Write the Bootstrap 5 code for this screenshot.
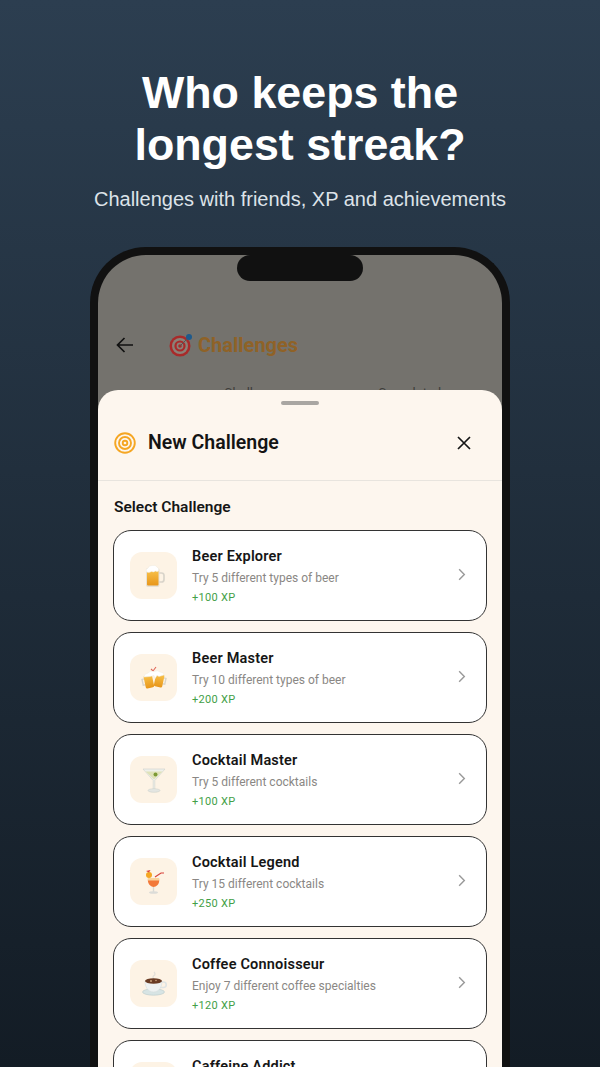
<!DOCTYPE html>
<html lang="en">
<head>
  <meta charset="UTF-8">
  <title>Challenges</title>
  <link href="https://cdn.jsdelivr.net/npm/bootstrap@5.3.3/dist/css/bootstrap.min.css" rel="stylesheet">
  <style>
    html, body { height: 1067px; overflow: hidden; }
    body { background: linear-gradient(180deg, #2c3e50 0%, #131c25 100%); font-family: Roboto, sans-serif; }
    .promo-head { padding-top: 66px; height: 247px; color: #fff; text-align: center; font-family: "Liberation Sans", Arial, sans-serif; }
    .promo-head h1 { font-size: 44.8px; line-height: 52px; font-weight: 700; margin: 0; }
    .promo-head p { font-size: 20px; line-height: 24px; margin: 17px 0 0; color: #dde3e9; }
    .phone { width: 420px; height: 840px; margin: 0 auto; border: 8px solid #111; border-bottom: 0; border-radius: 56px 56px 0 0; background: #74726d; position: relative; overflow: hidden; }
    .notch { position: absolute; left: 139px; top: 0; width: 126px; height: 26px; background: #111; border-radius: 13px; z-index: 3; }
    .app-bar { padding: 52px 0 0 17px; height: 128px; color: #111; }
    .app-bar .back { width: 20px; height: 20px; margin-right: 34px; }
    .app-title { font-size: 20px; font-weight: 700; color: #8f6227; margin-left: 5px; }
    .behind-tabs { font-size: 13px; color: #3f3e3b; padding-left: 126px; gap: 90px; }
    .sheet { position: absolute; left: 0; right: 0; top: 135px; bottom: 0; background: #fdf6ee; border-radius: 20px 20px 0 0; z-index: 2; }
    .grip { width: 38px; height: 4px; border-radius: 2px; background: #a9a6a2; margin: 11px auto 0; }
    .sheet-head { height: 76px; padding: 0 16px; border-bottom: 1px solid #e8e4de; }
    .sheet-head h2 { font-size: 19.5px; line-height: 24px; font-weight: 600; color: #141414; margin: 0 0 0 12px; }
    .sheet-head .shut { margin-right: 14px; }
    .sect-label { font-size: 15.5px; line-height: 20px; font-weight: 600; color: #161616; margin: 16px 16px 13px; }
    .pick-list { margin: 0 15px; gap: 11px; }
    .pick { height: 91px; flex: none; background: #fff; border: 1.5px solid #333; border-radius: 18px; padding: 0 16px; }
    .tile { width: 47px; height: 47px; flex: none; border-radius: 12px; background: #fdf3e5; margin-right: 15px; }
    .tile svg { width: 26px; height: 26px; }
    .pick-body { min-width: 0; padding-top: 2px; }
    .pick-name { font-size: 14.5px; line-height: 18px; font-weight: 600; color: #161616; letter-spacing: .2px; }
    .pick-desc { font-size: 12px; line-height: 16px; color: #8a8784; margin-top: 4px; }
    .pick-xp { font-size: 11px; line-height: 14px; color: #43a047; letter-spacing: .3px; margin-top: 5px; }
    .chev { width: 15px; height: 15px; flex: none; margin-left: auto; margin-right: 1px; margin-top: -2px; }
  </style>
</head>
<body>
  <div class="promo-head">
    <h1>Who keeps the<br>longest streak?</h1>
    <p>Challenges with friends, XP and achievements</p>
  </div>

  <div class="phone">
    <div class="notch"></div>

    <!-- screen behind the sheet -->
    <div class="app-bar d-flex align-items-center">
      <svg class="back" viewBox="0 0 20 20" fill="none" stroke="#111" stroke-width="1.7"><path d="M18 10H2.500M9.500 3l-7 7 7 7"/></svg>
      <svg width="24" height="24" viewBox="0 0 24 24" fill="none">
        <circle cx="11" cy="13" r="10.500" fill="#a82a2a"/><circle cx="11" cy="13" r="8" fill="#8b8178"/><circle cx="11" cy="13" r="5.600" fill="#a82a2a"/><circle cx="11" cy="13" r="3.400" fill="#8b8178"/><circle cx="11" cy="13" r="1.800" fill="#a82a2a"/>
        <path d="M11 13 20 4" stroke="#555" stroke-width="1"/><circle cx="20" cy="4" r="3" fill="#1e5a8c"/>
      </svg>
      <span class="app-title">Challenges</span>
    </div>
    <div class="behind-tabs d-flex"><span>Challenges</span><span>Completed</span></div>

    <div class="sheet">
      <div class="grip"></div>
      <div class="sheet-head d-flex align-items-center">
        <svg width="22" height="22" viewBox="0 0 22 22" fill="none" stroke="#f5a623" stroke-width="1.900"><circle cx="11" cy="11" r="9.800"/><circle cx="11" cy="11" r="6"/><circle cx="11" cy="11" r="2.300"/></svg>
        <h2>New Challenge</h2>
        <svg class="shut ms-auto" width="16" height="16" viewBox="0 0 16 16" fill="none" stroke="#161616" stroke-width="1.700"><path d="M2 2l12 12M14 2 2 14"/></svg>
      </div>
      <div class="sect-label">Select Challenge</div>

      <div class="pick-list d-flex flex-column">
        <div class="pick d-flex align-items-center">
          <div class="tile d-flex align-items-center justify-content-center">
            <svg viewBox="0 0 26 26"><defs><linearGradient id="brew" x1="0" y1="0" x2="0" y2="1"><stop offset="0" stop-color="#f8c24a"/><stop offset="1" stop-color="#e8961a"/></linearGradient></defs><path d="M18 10h2.500a2.500 2.500 0 0 1 2.500 2.500v4a2.500 2.500 0 0 1-2.500 2.500H18" fill="none" stroke="#d9d4ca" stroke-width="1.700"/><rect x="5" y="5" width="13.500" height="19" rx="2" fill="#e6e0d4"/><rect x="6" y="7" width="11.500" height="15.500" rx="1" fill="url(#brew)"/><path d="M5.500 9q-1.500-3 1.500-4 1-3 4.500-2.500 3-1 4.500 1.500 2.500 1 1.500 4-1.500 1-3 0-2 1.500-4 .5-2.500 1.500-5 .5z" fill="#fff" stroke="#efe8da" stroke-width=".5"/></svg>
          </div>
          <div class="pick-body">
            <div class="pick-name">Beer Explorer</div>
            <div class="pick-desc">Try 5 different types of beer</div>
            <div class="pick-xp">+100 XP</div>
          </div>
          <svg class="chev" viewBox="0 0 16 16" fill="none" stroke="#999" stroke-width="1.500"><path d="M5.500 2.500 11 8l-5.500 5.500"/></svg>
        </div>

        <div class="pick d-flex align-items-center">
          <div class="tile d-flex align-items-center justify-content-center">
            <svg viewBox="0 0 26 26"><path d="M10 4l2 2 3-4" fill="none" stroke="#e0685a" stroke-width="1.100"/><g transform="rotate(-12 8 16)"><path d="M4 13H1.500v6H4" fill="none" stroke="#d9d4ca" stroke-width="1.400"/><rect x="3.500" y="10" width="8.500" height="13" rx="1.500" fill="url(#brew)"/></g><g transform="rotate(12 18 15)"><path d="M22 12h2.500v6H22" fill="none" stroke="#d9d4ca" stroke-width="1.400"/><rect x="14" y="9" width="8.500" height="13" rx="1.500" fill="url(#brew)"/></g><path d="M3 12q-.5-3 4-4 2-3 6-1.500 4-2 6 .5 4 0 4 3l-5 1.500-2-1-2 3-1-3-4 1z" fill="#fff" stroke="#efe8da" stroke-width=".5"/></svg>
          </div>
          <div class="pick-body">
            <div class="pick-name">Beer Master</div>
            <div class="pick-desc">Try 10 different types of beer</div>
            <div class="pick-xp">+200 XP</div>
          </div>
          <svg class="chev" viewBox="0 0 16 16" fill="none" stroke="#999" stroke-width="1.500"><path d="M5.500 2.500 11 8l-5.500 5.500"/></svg>
        </div>

        <div class="pick d-flex align-items-center">
          <div class="tile d-flex align-items-center justify-content-center">
            <svg viewBox="0 0 26 26"><path d="M2 2h22L13.800 13.500v9h-1.600v-9z" fill="#eef0ea" stroke="#cfd2cc" stroke-width=".6"/><path d="M4.500 4.500h17L13 12.500z" fill="#dfe2b8"/><circle cx="14.500" cy="7.500" r="2" fill="#7c9a35"/><ellipse cx="13" cy="23.500" rx="6" ry="1.800" fill="#e4e6e2" stroke="#c9ccc6" stroke-width=".5"/></svg>
          </div>
          <div class="pick-body">
            <div class="pick-name">Cocktail Master</div>
            <div class="pick-desc">Try 5 different cocktails</div>
            <div class="pick-xp">+100 XP</div>
          </div>
          <svg class="chev" viewBox="0 0 16 16" fill="none" stroke="#999" stroke-width="1.500"><path d="M5.500 2.500 11 8l-5.500 5.500"/></svg>
        </div>

        <div class="pick d-flex align-items-center">
          <div class="tile d-flex align-items-center justify-content-center">
            <svg viewBox="0 0 26 26"><path d="M14 8l6-4h3" fill="none" stroke="#d8433a" stroke-width="1.200"/><path d="M7 9h11c.5 3 .5 8-5.500 9C7 17 6.500 12 7 9z" fill="#f2793a"/><path d="M7 9h11l.2 2.500H6.800z" fill="#f9d29a"/><path d="M12.500 18v5" stroke="#d8d8d4" stroke-width="1.400"/><ellipse cx="12.500" cy="23.500" rx="4.500" ry="1.300" fill="#dcdcd8"/><circle cx="8" cy="6" r="3" fill="#f5a623"/><path d="M5 2l3 1.500 1.500-2.500z" fill="#d8433a"/></svg>
          </div>
          <div class="pick-body">
            <div class="pick-name">Cocktail Legend</div>
            <div class="pick-desc">Try 15 different cocktails</div>
            <div class="pick-xp">+250 XP</div>
          </div>
          <svg class="chev" viewBox="0 0 16 16" fill="none" stroke="#999" stroke-width="1.500"><path d="M5.500 2.500 11 8l-5.500 5.500"/></svg>
        </div>

        <div class="pick d-flex align-items-center">
          <div class="tile d-flex align-items-center justify-content-center">
            <svg viewBox="0 0 26 26"><path d="M13 8q-2-2 0-3.500t0-3.500" fill="none" stroke="#e3e0da" stroke-width="1.300"/><ellipse cx="12.500" cy="21" rx="11" ry="3.200" fill="#d7e4e4" stroke="#b9c9c9" stroke-width=".6"/><path d="M20 11h2.500a2.500 2.500 0 0 1 0 5.500H19" fill="none" stroke="#dfe4e4" stroke-width="1.600"/><path d="M4 10h17c0 6-3 11-8.500 11S4 16 4 10z" fill="#eef2f2" stroke="#d3dada" stroke-width=".5"/><ellipse cx="12.500" cy="10" rx="8.500" ry="2.800" fill="#6a3c24"/><circle cx="10" cy="10" r="1" fill="#c9a27e"/><circle cx="15" cy="9.500" r=".8" fill="#c9a27e"/></svg>
          </div>
          <div class="pick-body">
            <div class="pick-name">Coffee Connoisseur</div>
            <div class="pick-desc">Enjoy 7 different coffee specialties</div>
            <div class="pick-xp">+120 XP</div>
          </div>
          <svg class="chev" viewBox="0 0 16 16" fill="none" stroke="#999" stroke-width="1.500"><path d="M5.500 2.500 11 8l-5.500 5.500"/></svg>
        </div>

        <div class="pick d-flex align-items-center">
          <div class="tile d-flex align-items-center justify-content-center"></div>
          <div class="pick-body">
            <div class="pick-name">Caffeine Addict</div>
            <div class="pick-desc">Drink 20 coffees</div>
            <div class="pick-xp">+150 XP</div>
          </div>
          <svg class="chev" viewBox="0 0 16 16" fill="none" stroke="#999" stroke-width="1.500"><path d="M5.500 2.500 11 8l-5.500 5.500"/></svg>
        </div>
      </div>
    </div>
  </div>

  <script src="https://cdn.jsdelivr.net/npm/bootstrap@5.3.3/dist/js/bootstrap.bundle.min.js"></script>
</body>
</html>
